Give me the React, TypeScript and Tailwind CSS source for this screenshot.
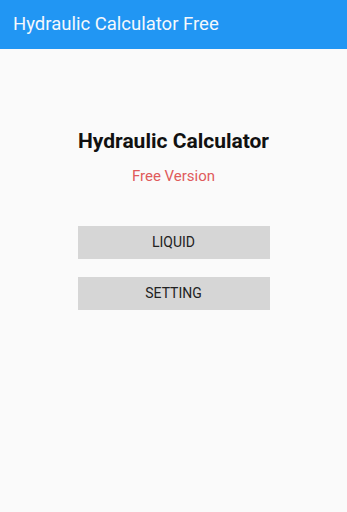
export default function App() {
  return (
    <div className="w-[347px] h-[512px] bg-[#fafafa] flex flex-col" style={{ fontFamily: 'Roboto, "Liberation Sans", sans-serif' }}>
      <div className="h-[49px] bg-[#2196f3] flex items-center pl-[13px] shrink-0">
        <span className="text-[#f4f8fc] text-[18.5px] leading-none">Hydraulic Calculator Free</span>
      </div>
      <div className="flex flex-col items-center">
        <div className="mt-[79px] text-[21px] font-bold text-[#111] leading-[26px]">Hydraulic Calculator</div>
        <div className="mt-[12px] text-[15px] text-[#e05b5b] leading-[20px]">Free Version</div>
        <div className="mt-[40px] w-[192px] h-[33px] bg-[#d6d6d6] flex items-center justify-center text-[14px] text-[#222]">LIQUID</div>
        <div className="mt-[18px] w-[192px] h-[33px] bg-[#d6d6d6] flex items-center justify-center text-[14px] text-[#222]">SETTING</div>
      </div>
    </div>
  );
}
